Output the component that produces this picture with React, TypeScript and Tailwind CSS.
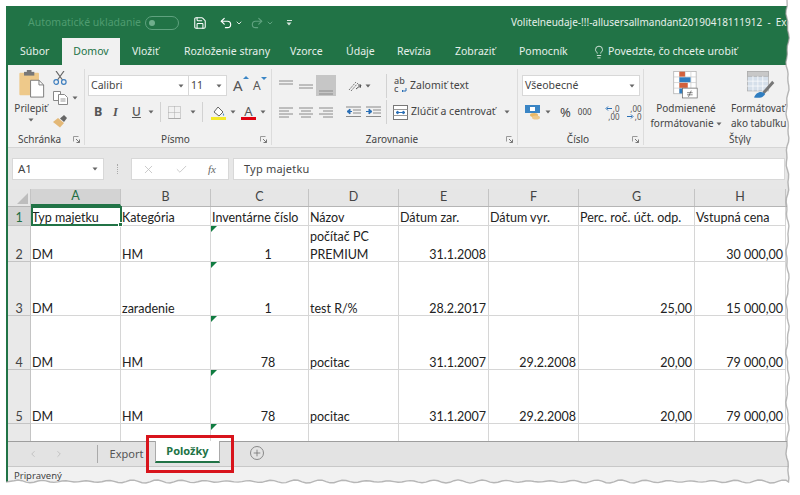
import { ChevronDown, Lightbulb, Plus, Save, Undo2, Redo2, ChevronLeft, ChevronRight, X, Check } from "lucide-react"

const uiFont = "[font-family:'Noto_Sans','Open_Sans',sans-serif]"

const cols = ["A", "B", "C", "D", "E", "F", "G", "H"]

type Row = {
  num: string
  height: string
  cells: string[]
}

const rows: Row[] = [
  { num: "1", height: "h-[19px]", cells: ["Typ majetku", "Kategória", "Inventárne číslo", "Názov", "Dátum zar.", "Dátum vyr.", "Perc. roč. účt. odp.", "Vstupná cena"] },
  { num: "2", height: "h-[36px]", cells: ["DM", "HM", "1", "počítač PC\nPREMIUM", "31.1.2008", "", "", "30 000,00"] },
  { num: "3", height: "h-[54px]", cells: ["DM", "zaradenie", "1", "test R/%", "28.2.2017", "", "25,00", "15 000,00"] },
  { num: "4", height: "h-[54px]", cells: ["DM", "HM", "78", "pocitac", "31.1.2007", "29.2.2008", "20,00", "79 000,00"] },
  { num: "5", height: "h-[54px]", cells: ["DM", "HM", "78", "pocitac", "31.1.2007", "29.2.2008", "20,00", "79 000,00"] },
  { num: "", height: "h-[18px]", cells: ["", "", "", "", "", "", "", ""] },
]

const widths = ["w-[90px]", "w-[90px]", "w-[98px]", "w-[90px]", "w-[90px]", "w-[90px]", "w-[116px]", "w-[91px]"]

function Caret({ className = "" }: { className?: string }) {
  return (
    <svg width="6" height="4" viewBox="0 0 6 4" className={`shrink-0 ${className}`}>
      <path d="M0.5 0.5h5L3 3.5z" fill="#666" />
    </svg>
  )
}

function Launcher() {
  return (
    <svg width="7" height="7" viewBox="0 0 7 7" className="shrink-0">
      <path d="M0.5 0.5h5M0.5 0.5v5" stroke="#999" fill="none" />
      <path d="M6.5 6.5L3 3M6.5 6.5V3.5M6.5 6.5H3.5" stroke="#777" fill="none" />
    </svg>
  )
}

function Sep({ className = "h-[20px]" }: { className?: string }) {
  return <div className={`w-px bg-[#d2d2d2] shrink-0 ${className}`} />
}

function Lines({ kind }: { kind: "left" | "center" | "right" }) {
  const d = {
    left: "M0 1h14M0 4h10M0 7h14M0 10h10",
    center: "M0 1h14M2 4h10M0 7h14M2 10h10",
    right: "M0 1h14M4 4h10M0 7h14M4 10h10",
  }[kind]
  return (
    <svg width="14" height="11" viewBox="0 0 14 11" className="shrink-0">
      <path d={d} stroke="#8a8a8a" strokeWidth="1" />
    </svg>
  )
}

function VAlign({ lines }: { lines: string }) {
  return (
    <svg width="14" height="12" viewBox="0 0 14 12" className="shrink-0">
      <path d={lines} stroke="#8a8a8a" strokeWidth="1" />
    </svg>
  )
}

function Clipboard() {
  return (
    <svg width="27" height="28" viewBox="0 0 28 30">
      <rect x="1" y="3" width="21" height="24" rx="1" fill="#eec98a" />
      <rect x="6" y="2" width="11" height="4" fill="#777" />
      <rect x="9" y="0" width="5" height="3" fill="#777" />
      <path d="M13 11h9l5 5v13H13z" fill="#fff" stroke="#777" />
      <path d="M22 11v5h5" fill="none" stroke="#777" />
    </svg>
  )
}

function Scissors() {
  return (
    <svg width="14" height="14" viewBox="0 0 14 14" fill="none">
      <path d="M3 0l6.5 9M11 0L4.500 9" stroke="#666" strokeWidth="1.2" />
      <circle cx="3.2" cy="11" r="2.3" stroke="#3f7fbf" strokeWidth="1.2" />
      <circle cx="10.8" cy="11" r="2.3" stroke="#3f7fbf" strokeWidth="1.2" />
    </svg>
  )
}

function CopyIcon() {
  return (
    <svg width="15" height="14" viewBox="0 0 15 14" fill="#fff" stroke="#888">
      <path d="M0.5 0.5h7l0 9h-7z" />
      <path d="M5.500 3.500h6l3 3v7h-9z" />
      <path d="M7.500 8h5M7.500 10h5" stroke="#999" />
    </svg>
  )
}

function Brush() {
  return (
    <svg width="15" height="14" viewBox="0 0 15 14">
      <path d="M0 8l5-4 6 5-4 4.500z" fill="#e3b877" />
      <path d="M7 4.500L11 1l3 3-3 4z" fill="#666" />
    </svg>
  )
}

function BorderIcon() {
  return (
    <svg width="13" height="13" viewBox="0 0 13 13" fill="none">
      <path d="M0.5 0.5h12v12h-12zM6.500 0.5v12M0.5 6.500h12" stroke="#aaa" strokeDasharray="1 1" />
      <path d="M0.5 12.500h12" stroke="#aaa" />
    </svg>
  )
}

function FillIcon() {
  return (
    <svg width="15" height="15" viewBox="0 0 15 15" fill="none">
      <path d="M3 7l4-5 5 5-4 4z" stroke="#666" fill="#fff" />
      <path d="M12 8c1 1 1.500 2 1 2.500s-1.500 0-1-2.500z" fill="#4a90c8" />
      <rect x="0" y="12" width="15" height="3" fill="#f4ea2a" />
    </svg>
  )
}

function FontColor() {
  return (
    <div className="flex flex-col items-center w-[15px]">
      <span className="text-[13px] leading-[12px] text-[#555]">A</span>
      <div className="h-[3px] w-[15px] bg-[#e00010]" />
    </div>
  )
}

function Orientation() {
  return (
    <svg width="14" height="13" viewBox="0 0 14 13" fill="none">
      <path d="M1 11L8 3M3 12l7-8" stroke="#777" strokeDasharray="2 1" />
      <path d="M8 10l5-4M13 6l-3 0M13 6l-1 3" stroke="#555" />
    </svg>
  )
}

function Indent({ right = false }: { right?: boolean }) {
  return (
    <svg width="15" height="12" viewBox="0 0 15 12" fill="none">
      <path d="M0 1h15M7 4h8M7 7h8M0 10.500h15" stroke="#8a8a8a" />
      <path d={right ? "M0 5.500h5M3 3l3 2.500-3 2.500z" : "M1 5.500h5M4 3L1 5.500 4 8z"} stroke="#2a6fb5" fill="#2a6fb5" />
    </svg>
  )
}

function WrapIcon() {
  return (
    <div className="relative w-[13px] h-[18px] text-[9px] leading-[8px] font-medium text-[#555] shrink-0">
      <div>ab</div>
      <div>c</div>
      <svg width="6" height="5" viewBox="0 0 6 5" className="absolute right-0 bottom-[2px]" fill="none">
        <path d="M5 0v3H1M2 2L1 3l1 1" stroke="#2a6fb5" />
      </svg>
    </div>
  )
}

function MergeIcon() {
  return (
    <svg width="15" height="15" viewBox="0 0 15 15" fill="none">
      <rect x="0.5" y="0.5" width="14" height="14" stroke="#777" fill="#fff" />
      <path d="M0.500 4.500h14M0.500 10.500h14" stroke="#999" />
      <path d="M3 7.500h9M3 7.500l2-1.500v3zM12 7.500l-2-1.500v3z" stroke="#2a6fb5" fill="#2a6fb5" />
    </svg>
  )
}

function Currency() {
  return (
    <svg width="16" height="15" viewBox="0 0 16 15">
      <rect x="0" y="0" width="15" height="8" fill="#3a85c5" />
      <rect x="5" y="2" width="5" height="4" fill="#fff" />
      <ellipse cx="9" cy="10" rx="4" ry="2" fill="#e8b866" />
      <ellipse cx="11" cy="12.500" rx="4" ry="2" fill="#eec98a" />
    </svg>
  )
}

function Decimal({ more = false }: { more?: boolean }) {
  return (
    <div className="flex items-center w-[15px] h-[15px] relative text-[8px] leading-[7px] text-[#555] shrink-0">
      <div className="absolute right-0 top-0">{more ? ",00" : ",0"}</div>
      <div className="absolute right-0 bottom-0">{more ? ",0" : ",00"}</div>
      <svg width="7" height="5" viewBox="0 0 7 5" className={`absolute left-0 ${more ? "bottom-[1px]" : "top-[1px]"}`}>
        <path d={more ? "M0 2.500h5M4 .5l2 2-2 2" : "M7 2.500H2M3 .5l-2 2 2 2"} stroke="#2a6fb5" fill="none" />
      </svg>
    </div>
  )
}

function CondFormat() {
  return (
    <svg width="28" height="28" viewBox="0 0 39 40">
      <rect x="2" y="0.500" width="32" height="32" fill="#fff" stroke="#aaa" />
      <path d="M2 8.500h32M2 16.500h32M2 24.500h32M10.500 0v33M18.500 0v33M26.500 0v33" stroke="#c8c8c8" />
      <rect x="10" y="1" width="8" height="7" fill="#d2603c" />
      <rect x="10" y="9" width="16" height="7" fill="#2f7dc0" />
      <rect x="10" y="17" width="12" height="7" fill="#d2603c" />
      <rect x="10" y="25" width="6" height="7" fill="#2f7dc0" />
      <rect x="14.500" y="24.500" width="21" height="14" fill="#fff" stroke="#666" />
      <path d="M21 31h8M21 34h8M27 28l-4 9" stroke="#555" />
    </svg>
  )
}

function TableFormat() {
  return (
    <svg width="28" height="28" viewBox="0 0 40 40">
      <rect x="0.500" y="0.500" width="30" height="28" fill="#d5dfea" stroke="#aaa" />
      <rect x="0.500" y="0.500" width="30" height="7" fill="#c8c8c8" stroke="#aaa" />
      <path d="M0 14.500h30M0 21.500h30M8.500 7v22M15.500 7v22M22.500 7v22" stroke="#fff" />
      <path d="M22 30l14-16 3 3-14 16z" fill="#777" />
      <path d="M10 38c2-6 8-10 14-7l2 2c-3 5-8 6-16 5z" fill="#2f7dc0" />
    </svg>
  )
}

function Ribbon() {
  return (
    <div className={`flex h-[83px] bg-[#f1f1f1] text-[#444] border-b border-[#d5d5d5] ${uiFont}`}>
      {/* Schránka */}
      <div className="w-[77px] flex flex-col border-r border-[#dcdcdc] shrink-0 mt-[4px] mb-[2px]">
        <div className="flex-1 flex">
          <div className="w-[45px] flex flex-col items-center pt-[1px] pl-[1px]">
            <Clipboard />
            <span className="text-[10px] leading-[14px] mt-[3px]">Prilepiť</span>
            <Caret className="mt-[3px]" />
          </div>
          <div className="flex flex-col gap-[6px] pt-[2px]">
            <Scissors />
            <div className="flex items-center gap-[4px]">
              <CopyIcon />
              <Caret />
            </div>
            <div className="mt-[3px]"><Brush /></div>
          </div>
        </div>
        <div className="flex items-center justify-between pl-[10px] pr-[4px] h-[12px] pt-[1px]">
          <span className="text-[10px]">Schránka</span>
          <Launcher />
        </div>
      </div>

      {/* Písmo */}
      <div className="w-[187px] flex flex-col border-r border-[#dcdcdc] shrink-0 mt-[4px] mb-[2px]">
        <div className="flex-1 flex flex-col pl-[3px]">
          <div className="flex items-center mt-[6px] h-[21px]">
            <div className="w-[101px] h-[21px] bg-white border border-[#d8d8d8] flex items-center justify-between pl-[2px] pr-[4px] text-[10.500px]">
              <span>Calibri</span>
              <Caret />
            </div>
            <div className="w-[38px] h-[21px] bg-white border border-l-0 border-[#d8d8d8] flex items-center justify-between pl-[2px] pr-[4px] text-[10.500px]">
              <span>11</span>
              <Caret />
            </div>
            <span className="ml-[6px] text-[15px] leading-none relative w-[14px] text-[#555]">
              A<span className="absolute -top-[2px] -right-[2px] w-0 h-0 border-l-[3px] border-r-[3px] border-b-[3px] border-transparent border-b-[#3a85c5]" />
            </span>
            <span className="ml-[6px] text-[12px] leading-none relative w-[12px] text-[#555]">
              A<span className="absolute -top-[3px] -right-[2px] w-0 h-0 border-l-[3px] border-r-[3px] border-t-[3px] border-transparent border-t-[#3a85c5]" />
            </span>
          </div>
          <div className="flex items-center mt-[6px] h-[20px] pl-[6px]">
            <span className="w-[19px] text-[12.500px] font-bold text-[#555]">B</span>
            <span className="w-[19px] text-[12.500px] italic text-[#555] [font-family:'Liberation_Serif',serif] font-bold">I</span>
            <span className="w-[13px] text-[12px] underline font-medium text-[#555]">U</span>
            <Caret className="ml-[3px]" />
            <Sep className="ml-[6px] h-[20px]" />
            <div className="ml-[7px]"><BorderIcon /></div>
            <Caret className="ml-[9px]" />
            <Sep className="ml-[6px] h-[20px]" />
            <div className="ml-[8px]"><FillIcon /></div>
            <Caret className="ml-[4px]" />
            <div className="ml-[5px]"><FontColor /></div>
            <Caret className="ml-[4px]" />
          </div>
        </div>
        <div className="flex items-center h-[12px] pt-[1px] pr-[4px]">
          <span className="flex-1 text-center text-[10px] pl-[6px]">Písmo</span>
          <Launcher />
        </div>
      </div>

      {/* Zarovnanie */}
      <div className="w-[246px] flex flex-col border-r border-[#dcdcdc] shrink-0 mt-[4px] mb-[2px]">
        <div className="flex-1 flex flex-col pl-[7px]">
          <div className="flex items-center h-[21px] mt-[6px]">
            <VAlign lines="M0 1h14M0 4h14" />
            <div className="ml-[6px] mt-[1px]"><VAlign lines="M0 5h14M0 8h14" /></div>
            <div className="ml-[3px] w-[20px] h-[21px] bg-[#c6c6c6] flex items-end justify-center pb-[1px]">
              <VAlign lines="M0 8h14M0 11h14" />
            </div>
            <Sep className="ml-[4px]" />
            <div className="ml-[7px]"><Orientation /></div>
            <Caret className="ml-[3px]" />
            <Sep className="ml-[15px] h-[24px]" />
            <div className="ml-[7px]"><WrapIcon /></div>
            <span className="ml-[3px] text-[10.500px]">Zalomiť text</span>
          </div>
          <div className="flex items-center h-[20px] mt-[6px]">
            <Lines kind="left" />
            <div className="ml-[6px]"><Lines kind="center" /></div>
            <div className="ml-[6px]"><Lines kind="right" /></div>
            <Sep className="ml-[6px]" />
            <div className="ml-[6px]"><Indent /></div>
            <div className="ml-[5px]"><Indent right /></div>
            <Sep className="ml-[5px] h-[24px]" />
            <div className="ml-[6px]"><MergeIcon /></div>
            <span className="ml-[3px] text-[10.500px]">Zlúčiť a centrovať</span>
            <Caret className="ml-[8px]" />
          </div>
        </div>
        <div className="flex items-center h-[12px] pt-[1px] pr-[4px]">
          <span className="flex-1 text-center text-[10px] pl-[6px]">Zarovnanie</span>
          <Launcher />
        </div>
      </div>

      {/* Číslo */}
      <div className="w-[126px] flex flex-col border-r border-[#dcdcdc] shrink-0 mt-[4px] mb-[2px]">
        <div className="flex-1 flex flex-col pl-[4px]">
          <div className="mt-[6px] w-[118px] h-[21px] bg-white border border-[#d8d8d8] flex items-center justify-between pl-[2px] pr-[4px] text-[10.500px]">
            <span>Všeobecné</span>
            <Caret />
          </div>
          <div className="flex items-center h-[20px] mt-[6px] pl-[3px]">
            <Currency />
            <Caret className="ml-[4px]" />
            <span className="ml-[9px] text-[13px] leading-none">%</span>
            <span className="ml-[7px] text-[8px] leading-none">000</span>
            <Sep className="ml-[7px]" />
            <div className="ml-[5px]"><Decimal /></div>
            <div className="ml-[7px]"><Decimal more /></div>
          </div>
        </div>
        <div className="flex items-center h-[12px] pt-[1px] pr-[4px]">
          <span className="flex-1 text-center text-[10px] pl-[6px]">Číslo</span>
          <Launcher />
        </div>
      </div>

      {/* Štýly */}
      <div className="flex-1 min-w-0 flex flex-col mt-[4px] mb-[2px] overflow-hidden">
        <div className="flex-1 flex text-[10px] leading-[15px]">
          <div className="w-[84px] pt-[2px] flex flex-col items-center">
            <CondFormat />
            <span className="mt-[2px]">Podmienené</span>
            <span className="whitespace-nowrap flex items-center gap-[2px]">formátovanie<Caret /></span>
          </div>
          <div className="w-[58px] pl-[3px] pt-[2px] flex flex-col items-start">
            <div className="pl-[16px]"><TableFormat /></div>
            <span className="mt-[2px] whitespace-nowrap">Formátovať</span>
            <span className="whitespace-nowrap">ako tabuľku</span>
          </div>
        </div>
        <div className="h-[12px] pt-[1px] pl-[46px] text-[10px] flex items-center justify-center">Štýly</div>
      </div>
    </div>
  )
}

function FormulaBar() {
  return (
    <div className={`h-[41px] bg-[#e7e7e7] flex items-start pt-[10px] pl-[4px] pr-[5px] text-[#444] ${uiFont}`}>
      <div className="w-[92px] h-[22px] bg-white border border-[#d8d8d8] flex items-center justify-between px-[5px] text-[11.500px]">
        <span>A1</span>
        <Caret />
      </div>
      <div className="w-[27px] flex justify-center items-center h-[22px]">
        <div className="h-[10px] border-l border-dotted border-[#aaa]" />
      </div>
      <div className="w-[98px] h-[22px] bg-white border border-[#d8d8d8] flex items-center pl-[10px] gap-[20px]">
        <X size={13} strokeWidth={1.5} className="text-[#c0c0c0]" />
        <Check size={13} strokeWidth={1.5} className="text-[#c0c0c0]" />
        <span className="text-[11px] italic text-[#666] [font-family:'Liberation_Serif',serif]">fx</span>
      </div>
      <div className="ml-[4px] flex-1 h-[22px] bg-white border border-[#d8d8d8] flex items-center pl-[10px] text-[11px] tracking-[0.2px]">
        Typ majetku
      </div>
    </div>
  )
}

function Sheet() {
  return (
    <div className="relative h-[252px] overflow-hidden bg-white [font-family:'Lato','Open_Sans',sans-serif] text-[12.500px] text-[#222]">
      <div className="flex h-[18px] bg-[#e6e6e6] border-b border-[#b5b5b5]">
        <div className="w-[23px] shrink-0 border-r border-[#c4c4c4] flex items-end justify-end pr-[2px] pb-[2px]">
          <div className="w-0 h-0 border-l-[11px] border-b-[11px] border-transparent border-b-[#bdbdbd]" />
        </div>
        {cols.map((c, i) => (
          <div
            key={c}
            className={`${widths[i]} shrink-0 flex items-center justify-center border-r border-[#c4c4c4] ${c === "A" ? "bg-[#d3d3d3] text-[#1f6e43] border-b-2 border-b-[#217346]" : "text-[#444]"}`}
          >
            {c}
          </div>
        ))}
      </div>
      {rows.map((r, ri) => (
        <div key={ri} className={`flex ${r.height}`}>
          <div className={`w-[23px] shrink-0 flex items-end justify-center border-r border-b border-[#c4c4c4] pb-[1px] leading-[18px] ${ri === 0 ? "bg-[#d3d3d3] text-[#1f6e43]" : "bg-[#e9e9e9] text-[#444]"}`}>
            <span className={`relative ${ri === 0 ? "top-[3px]" : "top-[4px]"}`}>{r.num}</span>
          </div>
          {r.cells.map((v, i) => {
            const right = (i === 2 || i >= 4) && ri > 0
            return (
              <div
                key={i}
                className={`${widths[i]} relative shrink-0 flex items-end border-r border-b border-[#d6d6d6] pl-[1px] pr-[2px] pb-[1px] leading-[18px] whitespace-pre-line ${right ? "justify-end text-right" : ""} ${i === 2 && ri > 0 ? "pr-[28px]" : ""}`}
              >
                {i === 2 && ri > 0 && (
                  <div className="absolute left-0 top-0 w-0 h-0 border-t-[6px] border-r-[6px] border-t-[#107c41] border-r-transparent" />
                )}
                <span className={`relative ${ri === 0 ? "top-[3px] whitespace-nowrap" : "top-[4px]"} ${i === 2 && ri > 0 ? "w-[24px] text-center" : ""}`}>{v}</span>
              </div>
            )
          })}
        </div>
      ))}
      {/* selected cell */}
      <div className="absolute left-[23px] top-[17px] w-[91px] h-[20px] border-2 border-[#217346]">
        <div className="absolute -right-[3px] -bottom-[3px] w-[5px] h-[5px] bg-[#217346] border border-white" />
      </div>
    </div>
  )
}

function TabBar() {
  return (
    <div className={`relative h-[26px] bg-[#e3e3e3] border-t border-[#9e9e9e] border-b border-b-[#c8c8c8] flex items-start ${uiFont}`}>
      <div className="w-[89px] h-[24px] flex items-center justify-end gap-[16px] pr-[33px] text-[#bcbcbc]">
        <ChevronLeft size={10} strokeWidth={2} />
        <ChevronRight size={10} strokeWidth={2} />
      </div>
      <div className="h-[18px] mt-[3px] border-l border-[#aaa]" />
      <div className="w-[57px] h-[24px] flex items-center justify-center text-[11px] text-[#555]">Export</div>
      <div className="w-[65px] h-[22px] -mt-px bg-white border-x border-[#aaa] border-b-2 border-b-[#217346] flex items-center justify-center text-[11px] font-bold text-[#217346]">
        Položky
      </div>
      <div className="ml-[30px] mt-[4px] w-[14px] h-[14px] rounded-full border border-[#888] flex items-center justify-center text-[#777]">
        <Plus size={10} strokeWidth={2} />
      </div>
    </div>
  )
}

// torn paper edge of the screenshot, right and bottom side
function tornEdge() {
  const pts: string[] = ["M787 0"]
  for (let y = 6; y <= 482; y += 4) {
    pts.push(`L${(787.5 + Math.sin(y * 1.7) * 1.1 + Math.sin(y * 0.37) * 0.6).toFixed(1)} ${y}`)
  }
  for (let x = 786; x >= 12; x -= 4) {
    pts.push(`L${x} ${(481.5 + Math.sin(x * 1.3) * 1.1 + Math.sin(x * 0.23) * 0.5).toFixed(1)}`)
  }
  pts.push("L6 482")
  return pts.join(" ")
}

export default function App() {
  const edge = tornEdge()
  return (
    <div className="relative w-[800px] h-[495px] bg-white overflow-hidden pt-[6px] pl-[6px]">
      <div className="relative w-[784px] h-[478px] border-l-2 border-[#217346] bg-[#f1f1f1] overflow-hidden">
        {/* title bar */}
        <div className={`h-[32px] bg-[#217346] flex items-center text-[10.500px] pt-[1px] whitespace-nowrap [&>*]:shrink-0 ${uiFont}`}>
          <span className="ml-[20px] text-[#4f9c70]">Automatické ukladanie</span>
          <div className="ml-[4px] w-[34px] h-[14px] rounded-full border border-[#5fa27f] flex items-center pl-[3px]">
            <div className="w-[6px] h-[6px] rounded-full bg-[#6fae8c]" />
          </div>
          <Save size={14} strokeWidth={1.8} className="ml-[14px] text-white" />
          <Undo2 size={14} strokeWidth={2} className="ml-[12px] text-white" />
          <ChevronDown size={8} strokeWidth={3} className="ml-[2px] text-[#d5e5dc]" />
          <Redo2 size={14} strokeWidth={2} className="ml-[7px] text-[#5fa27f]" />
          <ChevronDown size={8} strokeWidth={3} className="ml-[2px] text-[#5fa27f]" />
          <div className="ml-[12px] flex flex-col items-center gap-[1px]">
            <div className="w-[5px] h-px bg-[#d5e5dc]" />
            <Caret className="[&>path]:fill-[#d5e5dc]" />
          </div>
          <span className="ml-[219px] text-[#e6f0ea] text-[10px]">
            Volitelneudaje-!!!-allusersallmandant20190418111912&nbsp; -&nbsp; Excel
          </span>
        </div>

        {/* tabs */}
        <div className={`h-[27px] bg-[#217346] flex items-stretch text-[10.500px] text-[#e6f0ea] whitespace-nowrap ${uiFont}`}>
          <span className="w-[54px] pl-[12px] flex items-center">Súbor</span>
          <span className="w-[58px] bg-[#f1f1f1] text-[#217346] flex items-center justify-center">Domov</span>
          <span className="w-[64px] pl-[12px] flex items-center">Vložiť</span>
          <span className="w-[106px] flex items-center">Rozloženie strany</span>
          <span className="w-[56px] flex items-center">Vzorce</span>
          <span className="w-[51px] flex items-center">Údaje</span>
          <span className="w-[58px] flex items-center">Revízia</span>
          <span className="w-[64px] flex items-center">Zobraziť</span>
          <span className="w-[73px] flex items-center">Pomocník</span>
          <span className="flex items-center gap-[2px]">
            <Lightbulb size={14} strokeWidth={1.5} />
            Povedzte, čo chcete urobiť
          </span>
        </div>

        <Ribbon />
        <FormulaBar />
        <Sheet />
        <TabBar />

        {/* status bar */}
        <div className={`h-[16px] bg-[#f1f1f1] pl-[6px] pt-[2px] text-[9.500px] leading-[13px] text-[#444] ${uiFont}`}>Pripravený</div>

        {/* red highlight */}
        <div className="absolute left-[138px] top-[429px] w-[88px] h-[38px] border-[3px] border-[#d8141c]" />
      </div>
      <svg width="800" height="495" viewBox="0 0 800 495" className="absolute left-0 top-0" fill="none">
        <path d={`${edge} L0 482 L0 495 L800 495 L800 0 Z`} fill="#fff" />
        <path d={edge} stroke="#9a9a9a" strokeWidth="1.4" opacity="0.7" />
      </svg>
    </div>
  )
}
